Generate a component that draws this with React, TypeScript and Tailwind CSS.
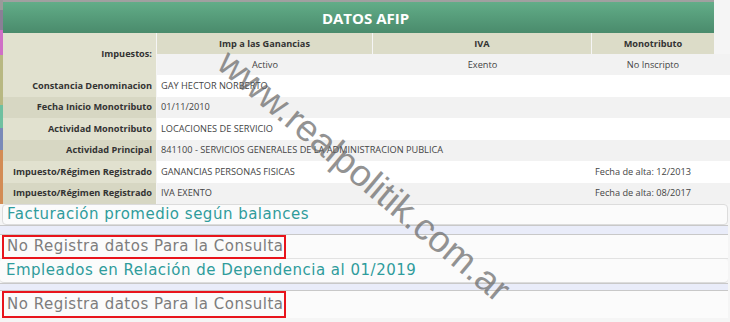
import React from "react";

const strip = [
  { h: "h-[10px]", c: "bg-[#9a9a9a]" },
  { h: "h-[20px]", c: "bg-[#8a7f96]" },
  { h: "h-[25px]", c: "bg-[#cf6fc6]" },
  { h: "h-[50px]", c: "bg-[#b8b882]" },
  { h: "h-[23px]", c: "bg-[#6fc0a0]" },
  { h: "h-[22px]", c: "bg-[#7a8ab8]" },
  { h: "h-[54px]", c: "bg-[#d38c55]" },
];

const rows = [
  { label: "Constancia Denominacion", value: "GAY HECTOR NORBERTO", alta: "" },
  { label: "Fecha Inicio Monotributo", value: "01/11/2010", alta: "" },
  { label: "Actividad Monotributo", value: "LOCACIONES DE SERVICIO", alta: "" },
  {
    label: "Actividad Principal",
    value: "841100 - SERVICIOS GENERALES DE LA ADMINISTRACION PUBLICA",
    alta: "",
  },
  {
    label: "Impuesto/Régimen Registrado",
    value: "GANANCIAS PERSONAS FISICAS",
    alta: "Fecha de alta: 12/2013",
  },
  { label: "Impuesto/Régimen Registrado", value: "IVA EXENTO", alta: "Fecha de alta: 08/2017" },
];

export default function App() {
  return (
    <div className="relative flex h-[322px] w-[730px] overflow-hidden bg-[#f5f5f5] font-['Open_Sans',sans-serif]">
      {/* tira de colores */}
      <div className="flex w-[3px] flex-col">
        {strip.map((s, i) => (
          <div key={i} className={`${s.h} ${s.c}`} />
        ))}
      </div>

      <div className="flex flex-1 flex-col">
        {/* Cabecera */}
        <div className="w-[711px] border-t-2 border-[#a0a0a0] bg-gradient-to-b from-[#62ad88] to-[#4a8b6c] pt-[3px] pb-[2px] pl-[14px] text-center text-[15px] leading-[26px] font-bold text-white">
          DATOS AFIP
        </div>

        {/* Impuestos */}
        <div className="flex h-[42px]">
          <div className="flex w-[153px] items-center justify-end bg-[#e1e1cf] pr-[4px] text-[9.2px] font-bold text-[#333]">
            Impuestos:
          </div>
          <div className="ml-px flex flex-1 flex-col">
            <div className="flex h-[21px] text-[9.2px] font-bold text-[#333]">
              <div className="flex w-[215px] items-center justify-center bg-[#dcdcc8]">Imp a las Ganancias</div>
              <div className="ml-px flex w-[218px] items-center justify-center bg-[#dcdcc8]">IVA</div>
              <div className="ml-px flex w-[122px] items-center justify-center bg-[#dcdcc8]">Monotributo</div>
            </div>
            <div className="flex h-[21px] bg-[#f2f2f2] text-[9.2px] text-[#444]">
              <div className="flex w-[216px] items-center justify-center">Activo</div>
              <div className="flex w-[219px] items-center justify-center">Exento</div>
              <div className="flex w-[122px] items-center justify-center">No Inscripto</div>
            </div>
          </div>
        </div>

        {/* Filas */}
        {rows.map((r, i) => (
          <div key={i} className="flex h-[21.5px]">
            <div
              className={`flex w-[153px] items-center justify-end pr-[4px] text-[9.2px] font-bold text-[#333] ${
                i % 2 === 0 ? "bg-[#e1e1cf]" : "bg-[#d7d7c3]"
              }`}
            >
              {r.label}
            </div>
            <div
              className={`ml-px flex flex-1 items-center text-[9.2px] text-[#444] ${
                i % 2 === 0 ? "bg-white" : "bg-[#f2f2f2]"
              }`}
            >
              <span className="w-[435px] pl-[4px]">{r.value}</span>
              <span className="pl-[3px]">{r.alta}</span>
            </div>
          </div>
        ))}

        {/* Secciones */}
        <div className="font-['DejaVu_Sans',sans-serif] text-[15px] tracking-[0.5px] whitespace-nowrap">
          <div className="mr-[2px] -ml-px flex h-[21px] items-center rounded-sm border border-[#dcdcdc] bg-[#fbfbfb] pl-[4px] text-[#2f9c9c]">
            Facturación promedio según balances
          </div>
          <div className="mr-[2px] -ml-[3px] h-[10px] border-y border-[#c8c8c8] bg-[#e9ecf9]" />
          <div className="mr-[2px] -ml-[3px] flex h-[24px] items-center border-b border-[#e2e2e2] bg-[#fbfbfb]">
            <div className="ml-[2px] flex h-[24px] w-[284px] items-center border-2 border-[#e8141c] pl-[3px] text-[#7d7d7d]">
              No Registra datos Para la Consulta
            </div>
          </div>
          <div className="mr-[2px] -ml-[3px] flex h-[24px] items-center rounded-sm border-b border-[#dcdcdc] bg-[#fbfbfb] pl-[6px] text-[#2f9c9c]">
            Empleados en Relación de Dependencia al 01/2019
          </div>
          <div className="mr-[2px] -ml-[3px] h-[8px] border-y border-[#c8c8c8] bg-[#e9ecf9]" />
          <div className="mr-[2px] -ml-[3px] flex h-[27px] items-center bg-[#fbfbfb]">
            <div className="ml-[2px] flex h-[27px] w-[284px] items-center border-2 border-[#e8141c] pl-[3px] text-[#7d7d7d]">
              No Registra datos Para la Consulta
            </div>
          </div>
        </div>
      </div>

      {/* marca de agua */}
      <div className="pointer-events-none absolute top-[176px] left-[364px] -translate-x-1/2 -translate-y-1/2 rotate-[40deg] font-['Liberation_Sans',sans-serif] text-[37px] whitespace-nowrap text-[#666] opacity-70">
        www.realpolitik.com.ar
      </div>
    </div>
  );
}
